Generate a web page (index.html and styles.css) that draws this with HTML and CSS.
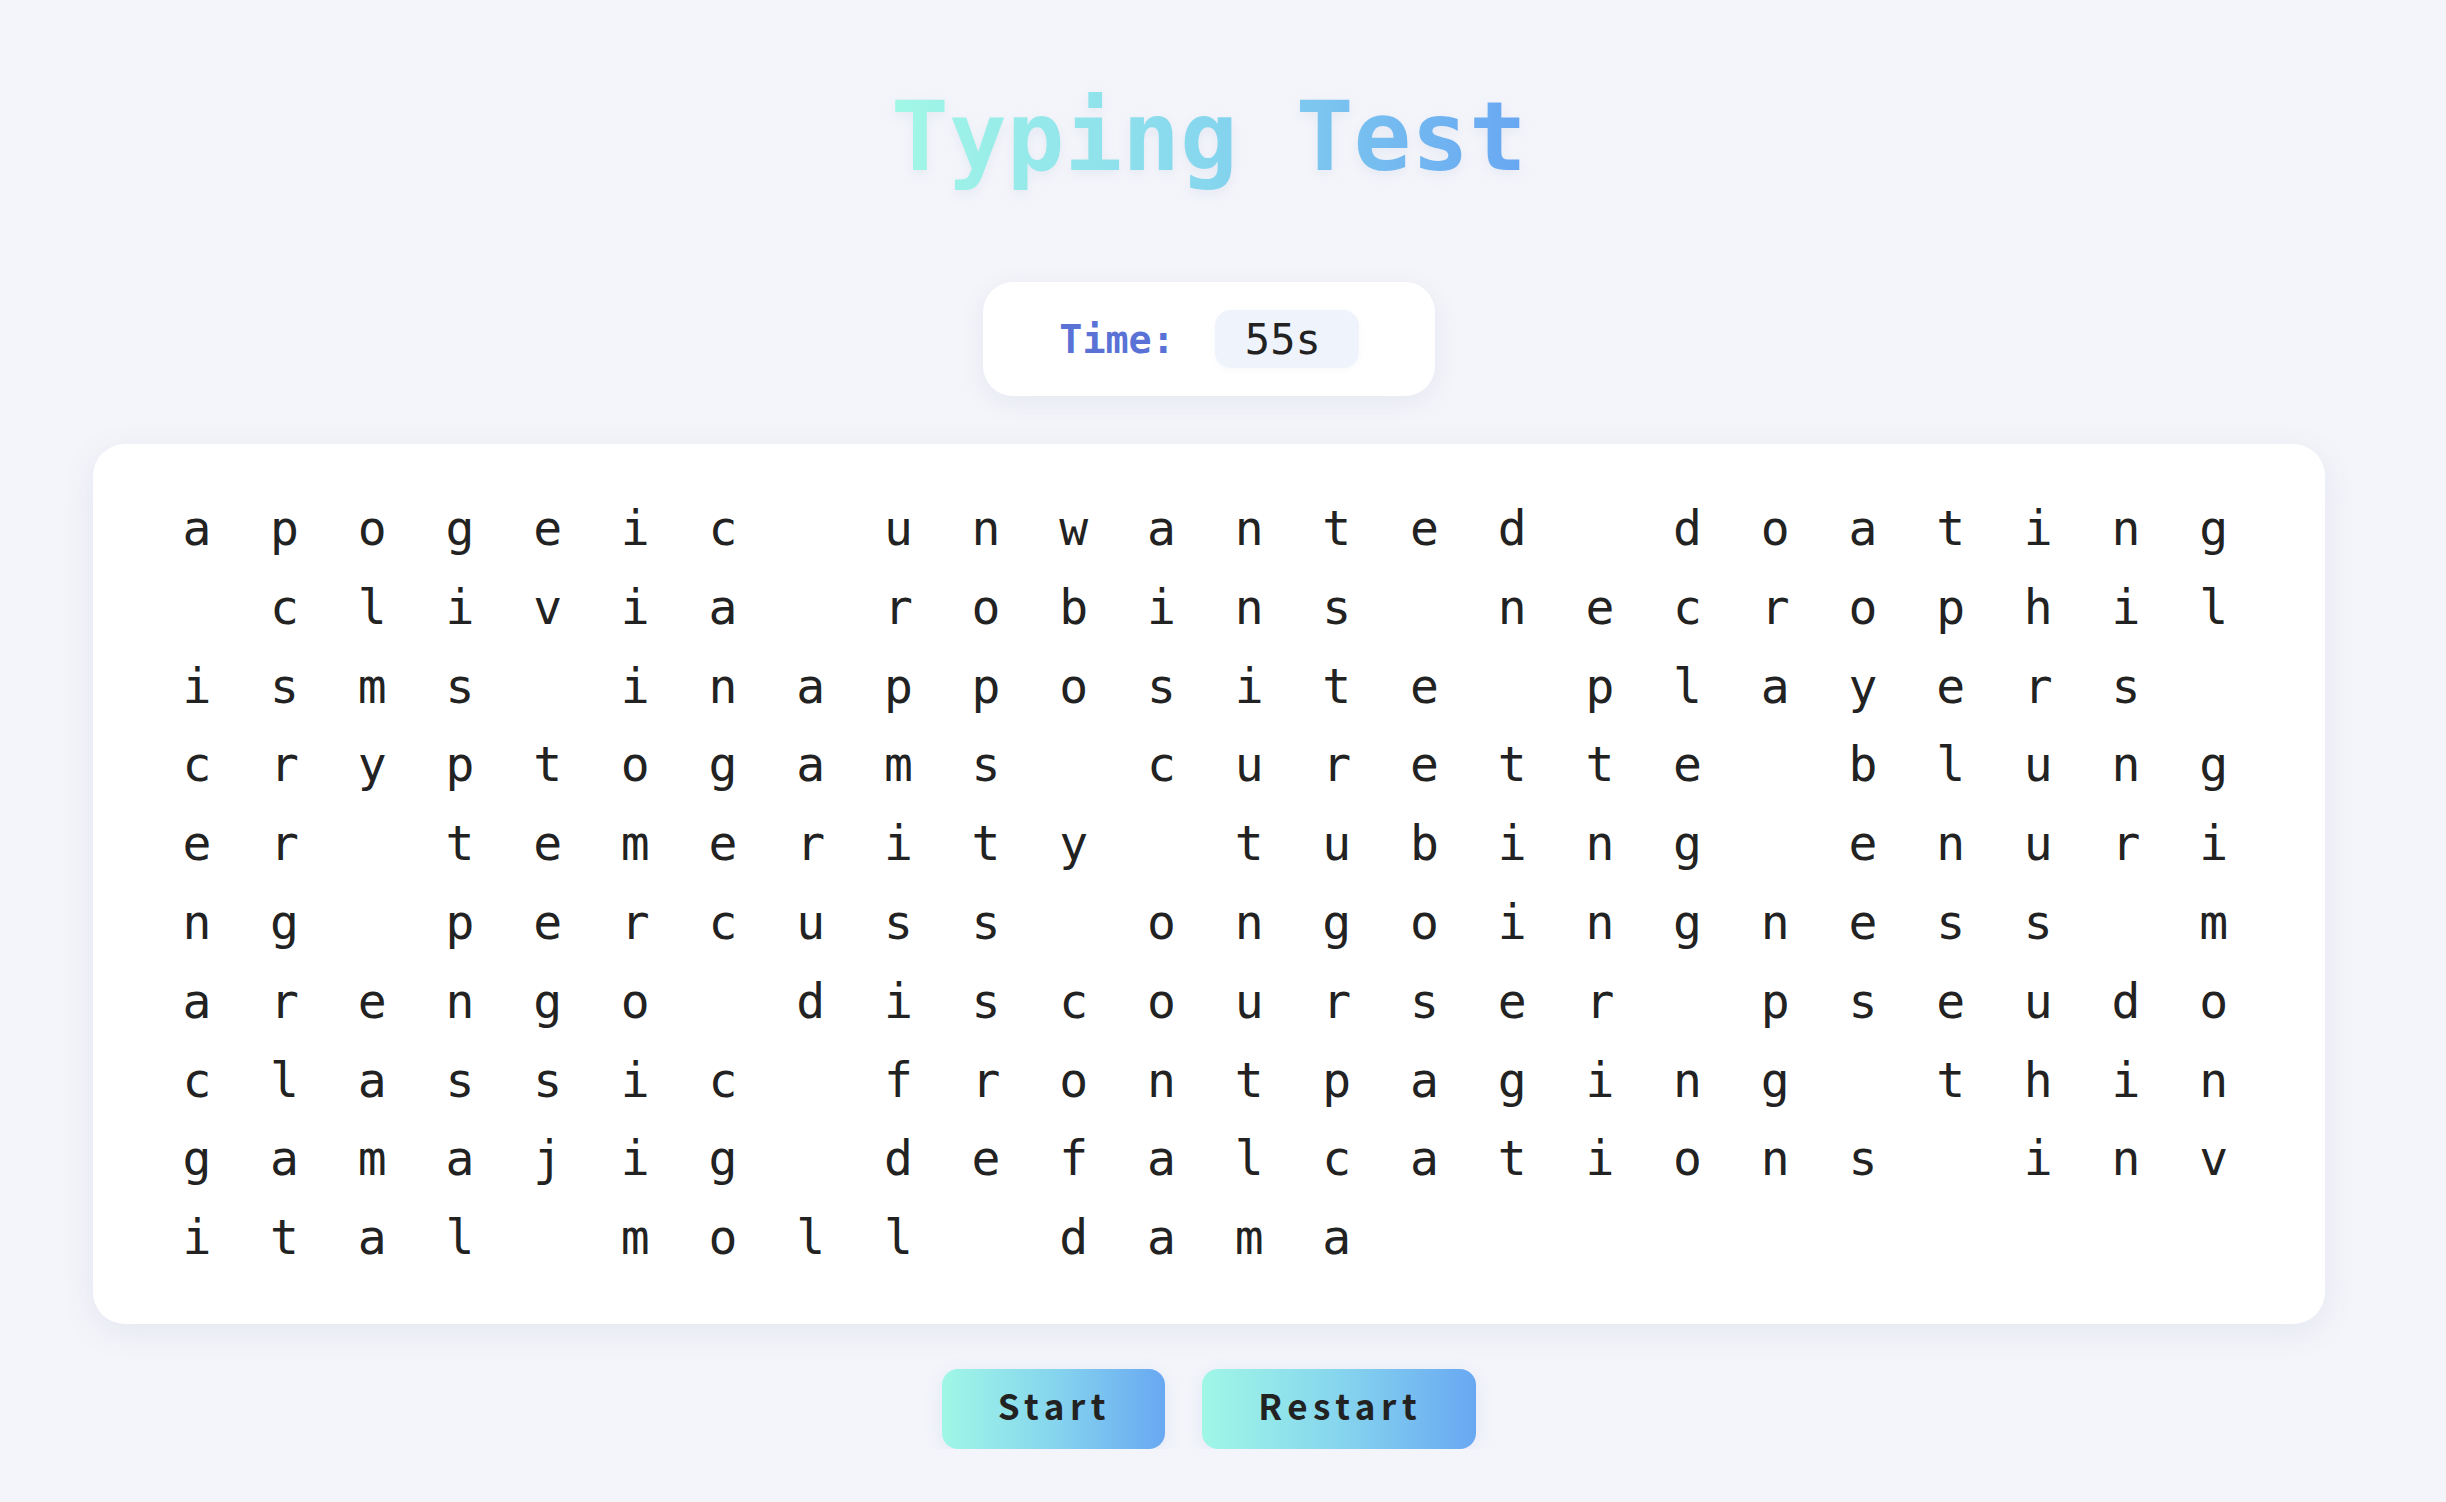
FILE: index.html
```html
<!DOCTYPE html>
<html lang="en">
<head>
<meta charset="utf-8">
<title>Typing Test</title>
<link rel="stylesheet" href="styles.css">
</head>
<body>
<div class="page">
  <h1 class="title">Typing Test</h1>
  <div class="timer-wrap">
    <div class="timer">
      <span class="timer-label">Time:</span>
      <span class="timer-value">55s</span>
    </div>
  </div>
  <div class="board">
    <span>a</span><span>p</span><span>o</span><span>g</span><span>e</span><span>i</span><span>c</span><span>&nbsp;</span><span>u</span><span>n</span><span>w</span><span>a</span><span>n</span><span>t</span><span>e</span><span>d</span><span>&nbsp;</span><span>d</span><span>o</span><span>a</span><span>t</span><span>i</span><span>n</span><span>g</span>
    <span>&nbsp;</span><span>c</span><span>l</span><span>i</span><span>v</span><span>i</span><span>a</span><span>&nbsp;</span><span>r</span><span>o</span><span>b</span><span>i</span><span>n</span><span>s</span><span>&nbsp;</span><span>n</span><span>e</span><span>c</span><span>r</span><span>o</span><span>p</span><span>h</span><span>i</span><span>l</span>
    <span>i</span><span>s</span><span>m</span><span>s</span><span>&nbsp;</span><span>i</span><span>n</span><span>a</span><span>p</span><span>p</span><span>o</span><span>s</span><span>i</span><span>t</span><span>e</span><span>&nbsp;</span><span>p</span><span>l</span><span>a</span><span>y</span><span>e</span><span>r</span><span>s</span><span>&nbsp;</span>
    <span>c</span><span>r</span><span>y</span><span>p</span><span>t</span><span>o</span><span>g</span><span>a</span><span>m</span><span>s</span><span>&nbsp;</span><span>c</span><span>u</span><span>r</span><span>e</span><span>t</span><span>t</span><span>e</span><span>&nbsp;</span><span>b</span><span>l</span><span>u</span><span>n</span><span>g</span>
    <span>e</span><span>r</span><span>&nbsp;</span><span>t</span><span>e</span><span>m</span><span>e</span><span>r</span><span>i</span><span>t</span><span>y</span><span>&nbsp;</span><span>t</span><span>u</span><span>b</span><span>i</span><span>n</span><span>g</span><span>&nbsp;</span><span>e</span><span>n</span><span>u</span><span>r</span><span>i</span>
    <span>n</span><span>g</span><span>&nbsp;</span><span>p</span><span>e</span><span>r</span><span>c</span><span>u</span><span>s</span><span>s</span><span>&nbsp;</span><span>o</span><span>n</span><span>g</span><span>o</span><span>i</span><span>n</span><span>g</span><span>n</span><span>e</span><span>s</span><span>s</span><span>&nbsp;</span><span>m</span>
    <span>a</span><span>r</span><span>e</span><span>n</span><span>g</span><span>o</span><span>&nbsp;</span><span>d</span><span>i</span><span>s</span><span>c</span><span>o</span><span>u</span><span>r</span><span>s</span><span>e</span><span>r</span><span>&nbsp;</span><span>p</span><span>s</span><span>e</span><span>u</span><span>d</span><span>o</span>
    <span>c</span><span>l</span><span>a</span><span>s</span><span>s</span><span>i</span><span>c</span><span>&nbsp;</span><span>f</span><span>r</span><span>o</span><span>n</span><span>t</span><span>p</span><span>a</span><span>g</span><span>i</span><span>n</span><span>g</span><span>&nbsp;</span><span>t</span><span>h</span><span>i</span><span>n</span>
    <span>g</span><span>a</span><span>m</span><span>a</span><span>j</span><span>i</span><span>g</span><span>&nbsp;</span><span>d</span><span>e</span><span>f</span><span>a</span><span>l</span><span>c</span><span>a</span><span>t</span><span>i</span><span>o</span><span>n</span><span>s</span><span>&nbsp;</span><span>i</span><span>n</span><span>v</span>
    <span>i</span><span>t</span><span>a</span><span>l</span><span>&nbsp;</span><span>m</span><span>o</span><span>l</span><span>l</span><span>&nbsp;</span><span>d</span><span>a</span><span>m</span><span>a</span>
  </div>
  <div class="controls">
    <button class="btn">Start</button>
    <button class="btn">Restart</button>
  </div>
</div>
</body>
</html>
```
FILE: styles.css
```css
html, body {
  margin: 0;
  padding: 0;
  background: #f4f5fa;
}

body {
  font-family: "DejaVu Sans Mono", monospace;
  color: #222;
}

.page {
  padding: 81px 121px 0 93px;
  display: flex;
  flex-direction: column;
  align-items: center;
}

.title {
  margin: 0 0 89px;
  font-size: 96px;
  font-weight: 700;
  line-height: normal;
  background: linear-gradient(90deg, #a2f8e6 0%, #86d6ee 50%, #67a6f2 100%);
  -webkit-background-clip: text;
  background-clip: text;
  -webkit-text-fill-color: transparent;
  color: transparent;
  filter: drop-shadow(0 4px 6px rgba(110, 130, 200, 0.10));
}

.timer-wrap {
  margin-bottom: 48px;
}

.timer {
  display: inline-flex;
  align-items: center;
  gap: 40px;
  padding: 28px 76px;
  background: #fff;
  border-radius: 30px;
  box-shadow: 0 6px 26px rgba(90, 100, 150, 0.09);
}

.timer-label {
  font-size: 38.4px;
  font-weight: 700;
  color: #5a72d5;
}

.timer-value {
  font-size: 42px;
  line-height: 49px;
  color: #222;
  background: #eff3fb;
  padding: 4.5px 38px 4.5px 30px;
  border-radius: 16px;
  box-shadow: 0 2px 6px rgba(120, 140, 190, 0.06);
}

.board {
  align-self: stretch;
  display: flex;
  flex-wrap: wrap;
  padding: 45px 60px 47px;
  background: #fff;
  border-radius: 32px;
  box-shadow: 0 8px 34px rgba(80, 90, 140, 0.09);
  margin-bottom: 45px;
}

.board span {
  display: block;
  width: 87.7px;
  height: 78.8px;
  line-height: 78.8px;
  text-align: center;
  font-size: 48px;
  color: #222;
  white-space: pre;
}

.controls {
  display: flex;
  gap: 37px;
}

.btn {
  font-family: "Noto Sans CJK SC", "Noto Sans", sans-serif;
  font-size: 35px;
  line-height: 50px;
  font-weight: 700;
  letter-spacing: 5.6px;
  color: #222;
  border: none;
  border-radius: 16px;
  padding: 11px 54px 19px 56px;
  background: linear-gradient(90deg, #a0f7e6 0%, #86d5ee 50%, #68a8f2 100%);
  box-shadow: 0 4px 18px rgba(100, 130, 220, 0.12);
  cursor: pointer;
}
```
